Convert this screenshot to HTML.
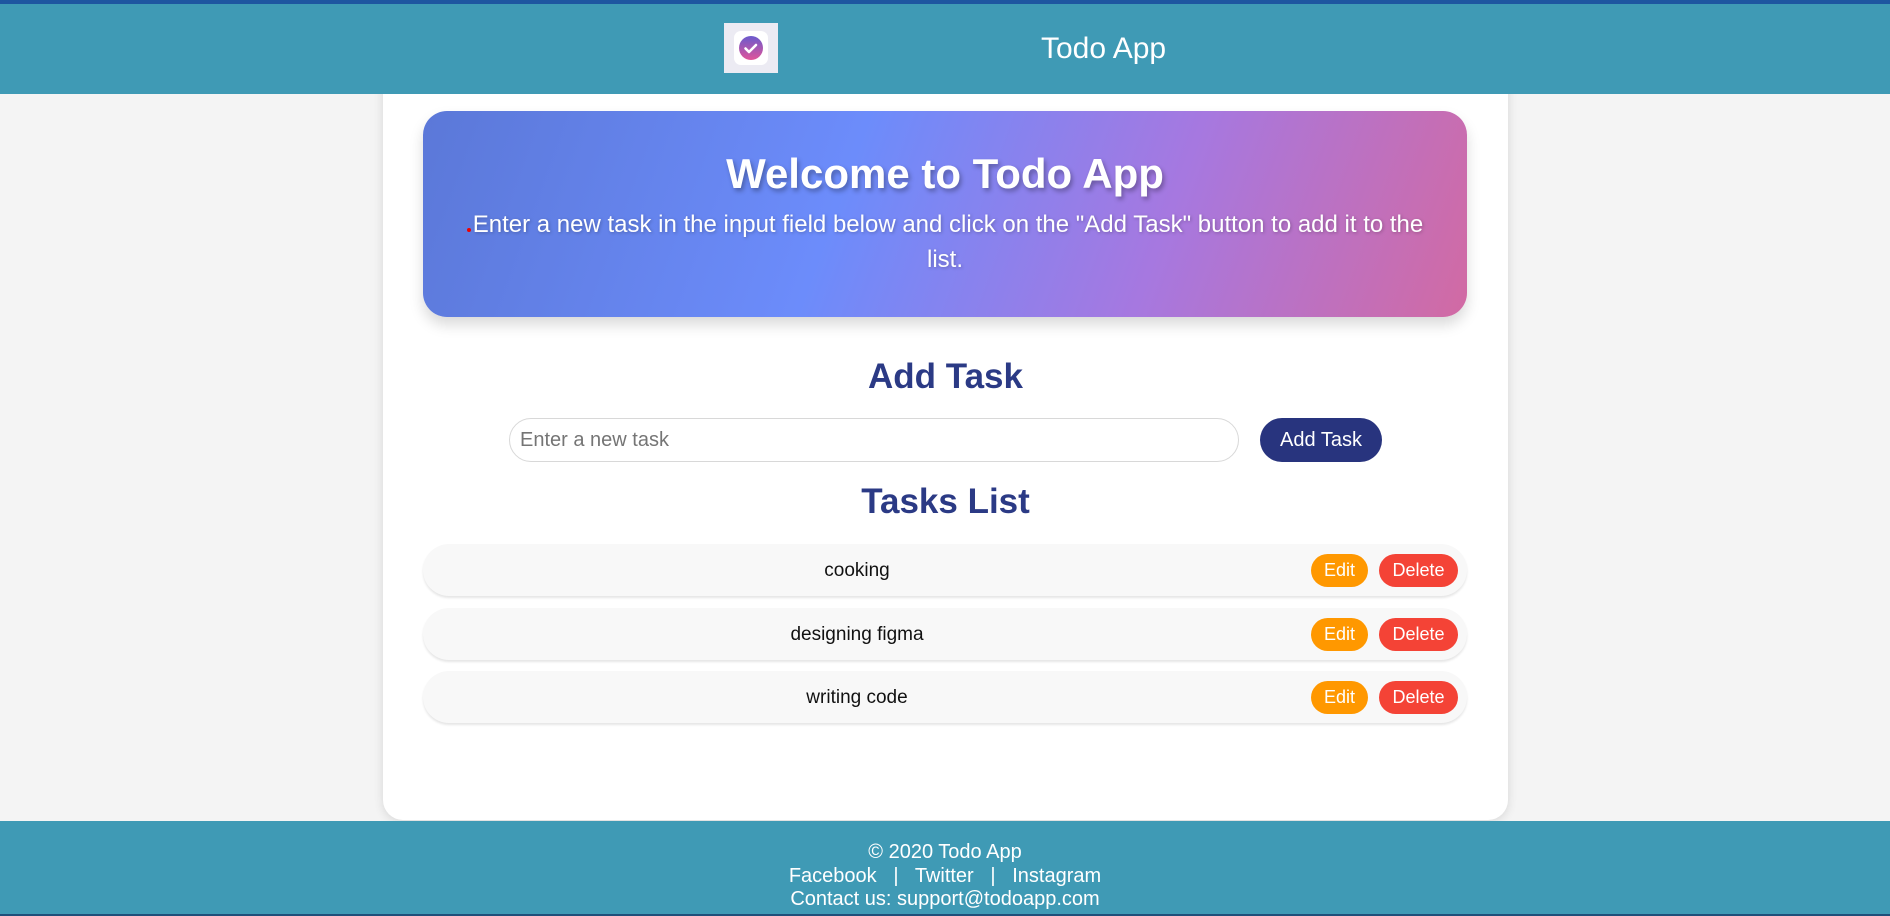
<!DOCTYPE html>
<html><head><meta charset="utf-8"><style>
*{box-sizing:border-box;margin:0;padding:0}
body{width:1890px;height:916px;background:#f4f4f4;font-family:"Liberation Sans",Arial,sans-serif;position:relative;overflow:hidden}
.top{position:absolute;left:0;top:0;width:1890px;height:4px;background:#1e56a0}
header{position:absolute;left:0;top:4px;width:1890px;height:90px;background:#3f9ab5;z-index:2}
.logo{position:absolute;left:724px;top:19px;width:54px;height:50px;background:#ecebf3;display:flex;align-items:center;justify-content:center}
.logo .in{width:34px;height:34px;background:#fff;border-radius:7px;display:flex;align-items:center;justify-content:center}
.ttl{position:absolute;left:1041px;top:28px;color:#fff;font-size:30px}
.card{position:absolute;left:383px;top:80px;width:1125px;height:740px;background:#fff;border-radius:0 0 20px 20px;box-shadow:0 2px 10px rgba(0,0,0,.12)}
.hero{position:absolute;left:423px;top:111px;width:1044px;height:206px;border-radius:24px;background:linear-gradient(110deg,#5b78d8 0%,#6c8cfb 40%,#a678e0 70%,#d26aa3 100%);box-shadow:0 8px 14px rgba(0,0,0,.15);color:#fff;text-align:center}
.hero h1{font-size:42px;margin-top:39px;text-shadow:2px 3px 5px rgba(0,0,0,.3)}
.hero p{font-size:24px;line-height:35px;margin:9px 40px 0;text-shadow:1px 1px 3px rgba(0,0,0,.25)}
.hero p .dot{display:inline-block;width:4px;height:4px;border-radius:2px;background:#e00;vertical-align:baseline;margin-right:2px}
h2{position:absolute;left:383px;width:1125px;text-align:center;color:#2b3a85;font-size:35px}
.inp{position:absolute;left:509px;top:418px;width:730px;height:44px;border:1px solid #d8d8d8;border-radius:22px;padding-left:10px;font-size:20px;color:#757575;line-height:42px}
.btn{position:absolute;left:1260px;top:418px;width:122px;height:44px;background:#28347e;border-radius:22px;color:#fff;font-size:20px;text-align:center;line-height:44px}
.row{position:absolute;left:423px;width:1044px;height:52px;background:#f8f8f8;border-radius:26px;box-shadow:0 2px 2px rgba(0,0,0,.1)}
.row span{position:absolute;left:0;width:868px;text-align:center;top:16px;font-size:19px;color:#111}
.e,.d{position:absolute;top:10px;height:33px;border-radius:17px;color:#fff;font-size:18px;text-align:center;line-height:33px}
.e{left:888px;width:57px;background:#ff9800}
.d{left:956px;width:79px;background:#f44336}
footer{position:absolute;left:0;top:821px;width:1890px;height:95px;background:#3f9ab5;color:#fff;text-align:center;font-size:20px;line-height:23.5px;padding-top:20px;border-bottom:2px solid #1e4f7a}
</style></head><body>
<div class="top"></div>
<div class="card"></div>
<header><div class="logo"><div class="in"><svg width="26" height="26" viewBox="0 0 26 26"><defs><linearGradient id="g" x1="0" y1="0" x2="0" y2="1"><stop offset="0" stop-color="#6a5acd"/><stop offset="1" stop-color="#e0559a"/></linearGradient></defs><circle cx="13" cy="13" r="12" fill="url(#g)"/><path d="M7.5 13.5l3.5 3.5 7-7" stroke="#fff" stroke-width="2.6" fill="none" stroke-linecap="round" stroke-linejoin="round"/></svg></div></div><div class="ttl">Todo App</div></header>
<div class="hero"><h1>Welcome to Todo App</h1><p><span class="dot"></span>Enter a new task in the input field below and click on the "Add Task" button to add it to the list.</p></div>
<h2 style="top:357px">Add Task</h2>
<div class="inp">Enter a new task</div><div class="btn">Add Task</div>
<h2 style="top:482px">Tasks List</h2>
<div class="row" style="top:544px"><span>cooking</span><div class="e">Edit</div><div class="d">Delete</div></div>
<div class="row" style="top:608px"><span>designing figma</span><div class="e">Edit</div><div class="d">Delete</div></div>
<div class="row" style="top:671px"><span>writing code</span><div class="e">Edit</div><div class="d">Delete</div></div>
<footer>© 2020 Todo App<br>Facebook &nbsp; | &nbsp; Twitter &nbsp; | &nbsp; Instagram<br>Contact us: support@todoapp.com</footer>
</body></html>
